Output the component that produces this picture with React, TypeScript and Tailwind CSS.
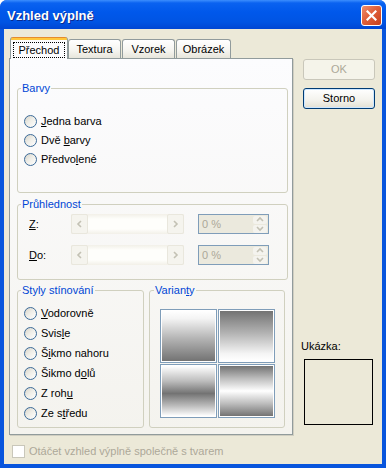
import type { ReactNode } from 'react';

// Windows XP "Vzhled výplně" dialog, Luna theme
const font = "font-['Liberation_Sans',Arial,sans-serif]";

function U({ children }: { children: ReactNode }) {
    return <span className="underline decoration-1 underline-offset-[1px]">{children}</span>;
}

function Radio({ label, h }: { label: ReactNode; h: string }) {
    return (
        <div className={`flex items-center gap-[4px] ${h}`}>
            <span className="h-[13px] w-[13px] shrink-0 rounded-full border border-[#3B6A98] bg-[linear-gradient(135deg,#D6D3C8_0%,#EEEDE7_45%,#FFFFFF_100%)]" />
            <span className="text-black">{label}</span>
        </div>
    );
}

function Chevron({ dir }: { dir: 'left' | 'right' | 'up' | 'down' }) {
    const d = {
        left: 'M5 1 L2 4 L5 7',
        right: 'M2 1 L5 4 L2 7',
        up: 'M1 5 L4 2 L7 5',
        down: 'M1 2 L4 5 L7 2',
    }[dir];
    return (
        <svg width="8" height="8" viewBox="0 0 8 8" className="block">
            <path d={d} fill="none" stroke="#C3C1B4" strokeWidth="1.6" />
        </svg>
    );
}

function ScrollBar() {
    return (
        <div className="flex h-[20px] w-[113px] bg-[linear-gradient(to_bottom,#F2F0E8,#FEFEFB_25%,#FEFEFB_75%,#F2F0E8)]">
            <div className="flex w-[17px] items-center justify-center rounded-[2px] border border-[#E9E7DD] bg-[#F5F4EE]">
                <Chevron dir="left" />
            </div>
            <div className="flex-1" />
            <div className="flex w-[17px] items-center justify-center rounded-[2px] border border-[#E9E7DD] bg-[#F5F4EE]">
                <Chevron dir="right" />
            </div>
        </div>
    );
}

function Spin() {
    return (
        <div className="ml-[14px] flex h-[20px] w-[71px] border border-[#7F9DB9] bg-[#EBE9DD]">
            <div className="flex-1 pl-[3px] leading-[18px] text-[#ACA899]">0 %</div>
            <div className="flex w-[16px] flex-col gap-px p-px">
                <div className="flex flex-1 items-center justify-center rounded-[2px] bg-[#F4F3EE]">
                    <Chevron dir="up" />
                </div>
                <div className="flex flex-1 items-center justify-center rounded-[2px] bg-[#F4F3EE]">
                    <Chevron dir="down" />
                </div>
            </div>
        </div>
    );
}

function Cell({ fill }: { fill: string }) {
    return (
        <div className="h-[54px] w-[57px] border border-[#7F9DB9] bg-white p-px">
            <div className={`h-full w-full ${fill}`} />
        </div>
    );
}

function Tab({ label, w, ml }: { label: string; w: string; ml: string }) {
    return (
        <div
            className={`flex h-[19px] items-center justify-center rounded-t-[3px] border-x border-t border-[#919B9C] bg-[linear-gradient(to_bottom,#FFFFFF,#F5F4EF_60%,#E7E5DB)] pt-[1px] ${w} ${ml}`}
        >
            {label}
        </div>
    );
}

export default function App() {
    return (
        <div className={`${font} h-[468px] w-[386px] bg-white text-[11px] leading-[13px]`}>
            <div className="flex h-full flex-col rounded-t-[7px] bg-[#0855DD]">
                {/* title bar */}
                <div className="flex h-[29px] items-start rounded-t-[7px] bg-[linear-gradient(to_bottom,#3C8EFE_0px,#0A62F0_3px,#0058EB_12px,#0054E3_22px,#0046D3_29px)]">
                    <div className="mt-[8px] pl-[7px] text-[13px] font-bold leading-[15px] text-white [text-shadow:1px_1px_0_#0A2A8F]">
                        Vzhled výplně
                    </div>
                    <div className="ml-auto mr-[4px] mt-[5px] flex h-[21px] w-[21px] items-center justify-center rounded-[3px] border border-white bg-[linear-gradient(135deg,#EE8E6E_0%,#E0603B_45%,#C8401C_100%)]">
                        <svg width="11" height="11" viewBox="0 0 11 11">
                            <path d="M1.5 1.5 L9.5 9.5 M9.5 1.5 L1.5 9.5" stroke="white" strokeWidth="2.2" strokeLinecap="square" />
                        </svg>
                    </div>
                </div>

                {/* body */}
                <div className="mx-[4px] mb-[4px] flex flex-1 bg-[#ECE9D8]">
                    {/* left column */}
                    <div className="flex flex-col pl-[5px] pt-[8px]">
                        <div className="flex h-[21px] items-end">
                            <div className="relative z-10 -mb-px ml-px flex h-[22px] w-[58px] items-center justify-center rounded-t-[3px] border-x border-[#919B9C] bg-[linear-gradient(to_bottom,#E68B2C_0px,#E68B2C_1px,#FFC73C_1px,#FFC73C_3px,#FCFCFE_3px)] pt-[3px]">
                                <span className="border border-dotted border-black px-[5px] py-px leading-[12px]">Přechod</span>
                            </div>
                            <Tab label="Textura" w="w-[53px]" ml="ml-0" />
                            <Tab label="Vzorek" w="w-[53px]" ml="ml-px" />
                            <Tab label="Obrázek" w="w-[55px]" ml="ml-px" />
                        </div>

                        <div className="h-[377px] w-[284px] border border-[#919B9C] bg-[linear-gradient(to_bottom,#FCFCFE,#F4F3EE)] px-[7px] pt-[22px] shadow-[1px_1px_0_#D0CEC1]">
                            <fieldset className="h-[112px] w-[271px] rounded-[3px] border border-[#D0D0BF] px-[6px]">
                                <legend className="-ml-[3px] px-px leading-[14px] text-[#0046D5]">Barvy</legend>
                                <div className="mt-[17px]">
                                    <Radio h="h-[19px]" label={<><U>J</U>edna barva</>} />
                                    <Radio h="h-[19px]" label={<>Dvě <U>b</U>arvy</>} />
                                    <Radio h="h-[19px]" label={<>Předvo<U>l</U>ené</>} />
                                </div>
                            </fieldset>

                            <fieldset className="mt-[4px] h-[83px] w-[271px] rounded-[3px] border border-[#D0D0BF] px-[6px]">
                                <legend className="-ml-[3px] px-px leading-[14px] text-[#0046D5]">Průhlednost</legend>
                                <div className="mt-[3px] flex flex-col gap-[11px]">
                                    <div className="flex items-center">
                                        <span className="w-[47px] pl-[5px]"><U>Z</U>:</span>
                                        <ScrollBar />
                                        <Spin />
                                    </div>
                                    <div className="flex items-center">
                                        <span className="w-[47px] pl-[5px]"><U>D</U>o:</span>
                                        <ScrollBar />
                                        <Spin />
                                    </div>
                                </div>
                            </fieldset>

                            <div className="mt-[3px] flex gap-[5px]">
                                <fieldset className="h-[145px] w-[128px] rounded-[3px] border border-[#D0D0BF] px-[6px]">
                                    <legend className="-ml-[3px] px-px leading-[14px] text-[#0046D5]">Styly stínování</legend>
                                    <div className="mt-[6px]">
                                        <Radio h="h-[20px]" label={<><U>V</U>odorovně</>} />
                                        <Radio h="h-[20px]" label={<>Svis<U>l</U>e</>} />
                                        <Radio h="h-[20px]" label={<>Š<U>i</U>kmo nahoru</>} />
                                        <Radio h="h-[20px]" label={<>Šikmo d<U>o</U>lů</>} />
                                        <Radio h="h-[20px]" label={<>Z roh<U>u</U></>} />
                                        <Radio h="h-[20px]" label={<>Ze s<U>t</U>ředu</>} />
                                    </div>
                                </fieldset>
                                <fieldset className="h-[145px] w-[137px] rounded-[3px] border border-[#D0D0BF] px-[6px]">
                                    <legend className="-ml-[2px] px-px leading-[14px] text-[#0046D5]">Varian<U>t</U>y</legend>
                                    <div className="ml-[4px] mt-[12px] grid w-[115px] grid-cols-2 gap-px">
                                        <Cell fill="bg-[linear-gradient(to_bottom,#FFFFFF_0%,#F4F4F4_15%,#B4B4B4_55%,#737373_100%)]" />
                                        <Cell fill="bg-[linear-gradient(to_bottom,#737373_0%,#B4B4B4_45%,#F4F4F4_85%,#FFFFFF_100%)]" />
                                        <Cell fill="bg-[linear-gradient(to_bottom,#FFFFFF_0%,#BDBDBD_30%,#737373_55%,#BDBDBD_80%,#FFFFFF_100%)]" />
                                        <Cell fill="bg-[linear-gradient(to_bottom,#737373_0%,#BDBDBD_25%,#FFFFFF_50%,#BDBDBD_75%,#737373_100%)]" />
                                    </div>
                                </fieldset>
                            </div>
                        </div>

                        <div className="ml-[3px] mt-[10px] flex items-center gap-[4px] text-[#ACA899]">
                            <span className="h-[13px] w-[13px] border border-[#C9C7BA] bg-white" />
                            <span>Otáčet vzhled výplně společně s tvarem</span>
                        </div>
                    </div>

                    {/* right column */}
                    <div className="ml-[8px] flex flex-col">
                        <button className="ml-[2px] mt-[30px] h-[21px] w-[72px] rounded-[3px] border border-[#C9C7BA] bg-[#F5F4EA] text-[#ACA899]">
                            OK
                        </button>
                        <button className="ml-[2px] mt-[8px] h-[21px] w-[72px] rounded-[3px] border border-[#003C74] bg-[linear-gradient(to_bottom,#FFFFFF,#F3F2EC_60%,#E3E0D3)] text-black shadow-[inset_0_0_0_1px_#CEE7FF]">
                            Storno
                        </button>
                        <div className="mt-[231px]">Ukázka:</div>
                        <div className="ml-[3px] mt-[6px] h-[66px] w-[69px] border border-black bg-[#ECE9D8]" />
                    </div>
                </div>
            </div>
        </div>
    );
}
